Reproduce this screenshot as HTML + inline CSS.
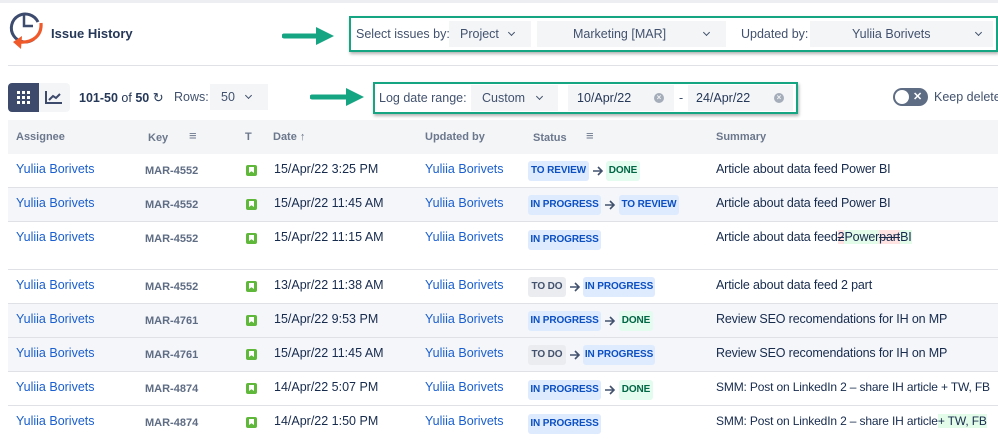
<!DOCTYPE html>
<html><head><meta charset="utf-8"><style>
*{box-sizing:border-box;margin:0;padding:0}
body{width:998px;height:442px;overflow:hidden;background:#fff;font-family:"Liberation Sans",Arial,sans-serif;color:#172b4d;position:relative;font-size:12.5px}
.a{position:absolute;white-space:nowrap}
.dd{position:absolute;background:#f4f5f7;height:26px;line-height:26px;color:#42526e;font-size:12.5px;white-space:nowrap}
.chev{position:absolute;width:5px;height:5px;border-right:1.6px solid #42526e;border-bottom:1.6px solid #42526e;transform:rotate(45deg)}
.box{position:absolute;border:2px solid #16a583;box-shadow:1px 2px 3px rgba(0,0,0,.3)}
.row{position:absolute;left:8px;width:990px;border-bottom:1px solid #dfe1e6}
.lnk{color:#1a5fcf}
.key{color:#5e6c84;font-weight:bold;font-size:11px}
.ic{position:absolute;width:11px;height:11px;background:#5fb83a;border-radius:2px}
.ic:after{content:"";position:absolute;left:3px;top:2px;width:5px;height:6px;background:#fff;clip-path:polygon(0 0,100% 0,100% 100%,50% 70%,0 100%)}
.lz{position:absolute;font-weight:bold;font-size:10px;letter-spacing:-0.1px;height:20px;line-height:20px;white-space:nowrap;display:flex;justify-content:center;border-radius:3px}
.bl{background:#deebff;color:#0b4fc2}
.gr{background:#e3fcef;color:#006644}
.gy{background:#ebecf0;color:#42526e}
.ar{position:absolute;width:12px;height:10px}
.hd{color:#6b778c;font-weight:bold;font-size:11px}
.sm{letter-spacing:-0.15px}
.clr{position:absolute;left:86px;top:8px;width:10px;height:10px;border-radius:50%;background:#a5adba;color:#f4f5f7;font-size:8px;line-height:10px;text-align:center;font-weight:bold}
</style></head><body>
<svg width="0" height="0" style="position:absolute"><defs><symbol id="arr" viewBox="0 0 12 10"><path d="M1 5 H10 M6 1 L10 5 L6 9" fill="none" stroke="#42526e" stroke-width="1.6"/></symbol></defs></svg>
<div class="a" style="left:0;top:0;width:998px;height:3px;background:#eceef2"></div>
<svg class="a" style="left:6px;top:6px" width="40" height="48" viewBox="0 0 40 48">
<path d="M28 33 A14 14 0 1 1 32 16" fill="none" stroke="#3d4b6e" stroke-width="3"/>
<path d="M18 8 V20 H27" fill="none" stroke="#3d4b6e" stroke-width="2.5"/>
<path d="M35 17 C36 30 26 37 14 36" fill="none" stroke="#f0592a" stroke-width="3.2"/>
<path d="M7 36 L16 30 L15 43 Z" fill="#f0592a"/>
</svg>
<div class="a" style="left:51px;top:26px;font-weight:bold;font-size:13px;color:#253858">Issue History</div>
<div class="a" style="left:8px;top:65px;width:990px;height:1px;background:#dfe1e6"></div>
<svg class="a" style="left:282px;top:26px" width="54" height="20"><path d="M2 10 H36" stroke="#16a583" stroke-width="5" stroke-linecap="round"/><path d="M34 1 L52 10 L34 19 Z" fill="#16a583"/></svg>
<svg class="a" style="left:310px;top:87px" width="56" height="20"><path d="M2 10 H38" stroke="#16a583" stroke-width="5" stroke-linecap="round"/><path d="M36 1 L54 10 L36 19 Z" fill="#16a583"/></svg>
<div class="box" style="left:349px;top:16px;width:649px;height:36px"></div>
<div class="a" style="left:356px;top:27px;color:#42526e">Select issues by:</div>
<div class="dd" style="left:449px;top:21px;width:82px;padding-left:11px">Project<span class="chev" style="left:60px;top:9px"></span></div>
<div class="dd" style="left:537px;top:21px;width:189px;padding-left:36px">Marketing [MAR]<span class="chev" style="left:167px;top:9px"></span></div>
<div class="a" style="left:741px;top:27px;color:#42526e">Updated by:</div>
<div class="dd" style="left:810px;top:21px;width:183px;padding-left:42px">Yuliia Borivets<span class="chev" style="left:166px;top:9px"></span></div>

<div class="a" style="left:8px;top:83px;width:62px;height:29px;background:#f4f5f7;border-radius:4px"></div>
<div class="a" style="left:8px;top:83px;width:31px;height:29px;background:#3e4a6b;border-radius:4px 0 0 4px"></div>
<svg class="a" style="left:17px;top:91px" width="14" height="14"><g fill="#fff"><rect x="0" y="0" width="3" height="3"/><rect x="5" y="0" width="3" height="3"/><rect x="10" y="0" width="3" height="3"/><rect x="0" y="5" width="3" height="3"/><rect x="5" y="5" width="3" height="3"/><rect x="10" y="5" width="3" height="3"/><rect x="0" y="10" width="3" height="3"/><rect x="5" y="10" width="3" height="3"/><rect x="10" y="10" width="3" height="3"/></g></svg>
<svg class="a" style="left:45px;top:90px" width="18" height="15"><path d="M1 1 V13 H17" fill="none" stroke="#3e4a6b" stroke-width="2"/><path d="M4 10 L8 6 L11 8 L15 4" fill="none" stroke="#3e4a6b" stroke-width="2"/></svg>
<div class="a" style="left:79px;top:90px;color:#253858"><b>101-50</b> of <b>50</b> <span style="font-size:13px">↻</span></div>
<div class="a" style="left:174px;top:90px;color:#42526e">Rows:</div>
<div class="dd" style="left:210px;top:84px;width:58px;padding-left:11px">50<span class="chev" style="left:36px;top:9px"></span></div>

<div class="box" style="left:373px;top:82px;width:425px;height:32px"></div>
<div class="a" style="left:379px;top:91px;color:#42526e">Log date range:</div>
<div class="dd" style="left:471px;top:85px;width:87px;padding-left:11px">Custom<span class="chev" style="left:66px;top:9px"></span></div>
<div class="dd" style="left:568px;top:85px;width:106px;padding-left:9px;color:#253858">10/Apr/22<span class="clr">×</span></div>
<div class="a" style="left:679px;top:91px;color:#42526e">-</div>
<div class="dd" style="left:688px;top:85px;width:105px;padding-left:8px;color:#253858">24/Apr/22<span class="clr">×</span></div>
<div class="a" style="left:893px;top:88px;width:35px;height:18px;border-radius:9px;background:#5e6c84"></div>
<div class="a" style="left:895px;top:90px;width:14px;height:14px;border-radius:50%;background:#fff"></div>
<div class="a" style="left:913px;top:88px;color:#fff;font-weight:bold;font-size:11px;line-height:18px">✕</div>
<div class="a" style="left:934px;top:90px;color:#42526e">Keep delete</div>

<div class="a" style="left:8px;top:120px;width:990px;height:34px;background:#f4f5f7"></div>
<div class="a hd" style="left:16px;top:131px">Assignee</div>
<div class="a hd" style="left:148px;top:132px">Key</div>
<div class="a hd" style="left:189px;top:128px;font-size:13px">≡</div>
<div class="a hd" style="left:245px;top:131px">T</div>
<div class="a hd" style="left:273px;top:131px">Date ↑</div>
<div class="a hd" style="left:425px;top:131px">Updated by</div>
<div class="a hd" style="left:533px;top:132px">Status</div>
<div class="a hd" style="left:586px;top:128px;font-size:13px">≡</div>
<div class="a hd" style="left:716px;top:131px">Summary</div>

<div class="row" style="top:154px;height:34px"></div>
<div class="row" style="top:188px;height:34px;background:#f4f6fa"></div>
<div class="row" style="top:222px;height:48px"></div>
<div class="row" style="top:270px;height:34px"></div>
<div class="row" style="top:304px;height:34px;background:#f4f6fa"></div>
<div class="row" style="top:338px;height:34px;background:#f4f6fa"></div>
<div class="row" style="top:372px;height:34px"></div>
<div class="row" style="top:406px;height:36px;border:none"></div>

<div class="a lnk" style="left:16px;top:162px">Yuliia Borivets</div><div class="a key" style="left:145px;top:165px">MAR-4552</div><div class="ic" style="left:246px;top:165px"></div><div class="a" style="left:274px;top:162px">15/Apr/22 3:25 PM</div><div class="a lnk" style="left:425px;top:162px">Yuliia Borivets</div>
<div class="lz bl" style="left:528px;top:161px;width:61px">TO REVIEW</div><svg class="ar" style="left:592px;top:166px"><use href="#arr"/></svg><div class="lz gr" style="left:606px;top:161px;width:34px">DONE</div><div class="a sm" style="left:716px;top:162px">Article about data feed Power BI</div>

<div class="a lnk" style="left:16px;top:196px">Yuliia Borivets</div><div class="a key" style="left:145px;top:199px">MAR-4552</div><div class="ic" style="left:246px;top:199px"></div><div class="a" style="left:274px;top:196px">15/Apr/22 11:45 AM</div><div class="a lnk" style="left:425px;top:196px">Yuliia Borivets</div>
<div class="lz bl" style="left:528px;top:195px;width:73px">IN PROGRESS</div><svg class="ar" style="left:604px;top:200px"><use href="#arr"/></svg><div class="lz bl" style="left:619px;top:195px;width:60px">TO REVIEW</div><div class="a sm" style="left:716px;top:196px">Article about data feed Power BI</div>

<div class="a lnk" style="left:16px;top:230px">Yuliia Borivets</div><div class="a key" style="left:145px;top:233px">MAR-4552</div><div class="ic" style="left:246px;top:233px"></div><div class="a" style="left:274px;top:230px">15/Apr/22 11:15 AM</div><div class="a lnk" style="left:425px;top:230px">Yuliia Borivets</div>
<div class="lz bl" style="left:528px;top:230px;width:73px">IN PROGRESS</div><div class="a sm" style="left:716px;top:230px">Article about data feed<span style="background:#ffe3e3;text-decoration:line-through">2</span><span style="background:#e3fce9">Power</span><span style="background:#ffe3e3;text-decoration:line-through">part</span><span style="background:#e3fce9">BI</span></div>

<div class="a lnk" style="left:16px;top:278px">Yuliia Borivets</div><div class="a key" style="left:145px;top:281px">MAR-4552</div><div class="ic" style="left:246px;top:281px"></div><div class="a" style="left:274px;top:278px">13/Apr/22 11:38 AM</div><div class="a lnk" style="left:425px;top:278px">Yuliia Borivets</div>
<div class="lz gy" style="left:528px;top:277px;width:38px">TO DO</div><svg class="ar" style="left:569px;top:282px"><use href="#arr"/></svg><div class="lz bl" style="left:583px;top:277px;width:72px">IN PROGRESS</div><div class="a sm" style="left:716px;top:278px">Article about data feed 2 part</div>

<div class="a lnk" style="left:16px;top:312px">Yuliia Borivets</div><div class="a key" style="left:145px;top:315px">MAR-4761</div><div class="ic" style="left:246px;top:315px"></div><div class="a" style="left:274px;top:312px">15/Apr/22 9:53 PM</div><div class="a lnk" style="left:425px;top:312px">Yuliia Borivets</div>
<div class="lz bl" style="left:528px;top:311px;width:73px">IN PROGRESS</div><svg class="ar" style="left:604px;top:316px"><use href="#arr"/></svg><div class="lz gr" style="left:619px;top:311px;width:34px">DONE</div><div class="a sm" style="left:716px;top:312px">Review SEO recomendations for IH on MP</div>

<div class="a lnk" style="left:16px;top:346px">Yuliia Borivets</div><div class="a key" style="left:145px;top:349px">MAR-4761</div><div class="ic" style="left:246px;top:349px"></div><div class="a" style="left:274px;top:346px">15/Apr/22 11:45 AM</div><div class="a lnk" style="left:425px;top:346px">Yuliia Borivets</div>
<div class="lz gy" style="left:528px;top:345px;width:38px">TO DO</div><svg class="ar" style="left:569px;top:350px"><use href="#arr"/></svg><div class="lz bl" style="left:583px;top:345px;width:72px">IN PROGRESS</div><div class="a sm" style="left:716px;top:346px">Review SEO recomendations for IH on MP</div>

<div class="a lnk" style="left:16px;top:380px">Yuliia Borivets</div><div class="a key" style="left:145px;top:383px">MAR-4874</div><div class="ic" style="left:246px;top:383px"></div><div class="a" style="left:274px;top:380px">14/Apr/22 5:07 PM</div><div class="a lnk" style="left:425px;top:380px">Yuliia Borivets</div>
<div class="lz bl" style="left:528px;top:380px;width:73px">IN PROGRESS</div><svg class="ar" style="left:604px;top:385px"><use href="#arr"/></svg><div class="lz gr" style="left:619px;top:380px;width:34px">DONE</div><div class="a sm" style="left:716px;top:380px;font-size:12px">SMM: Post on LinkedIn 2 – share IH article + TW, FB</div>

<div class="a lnk" style="left:16px;top:414px">Yuliia Borivets</div><div class="a key" style="left:145px;top:417px">MAR-4874</div><div class="ic" style="left:246px;top:417px"></div><div class="a" style="left:274px;top:414px">14/Apr/22 1:50 PM</div><div class="a lnk" style="left:425px;top:414px">Yuliia Borivets</div>
<div class="lz bl" style="left:528px;top:414px;width:73px">IN PROGRESS</div><div class="a sm" style="left:716px;top:414px;font-size:12px">SMM: Post on LinkedIn 2 – share IH article<span style="background:#e3fce9">+ TW, FB</span></div>
</body></html>
